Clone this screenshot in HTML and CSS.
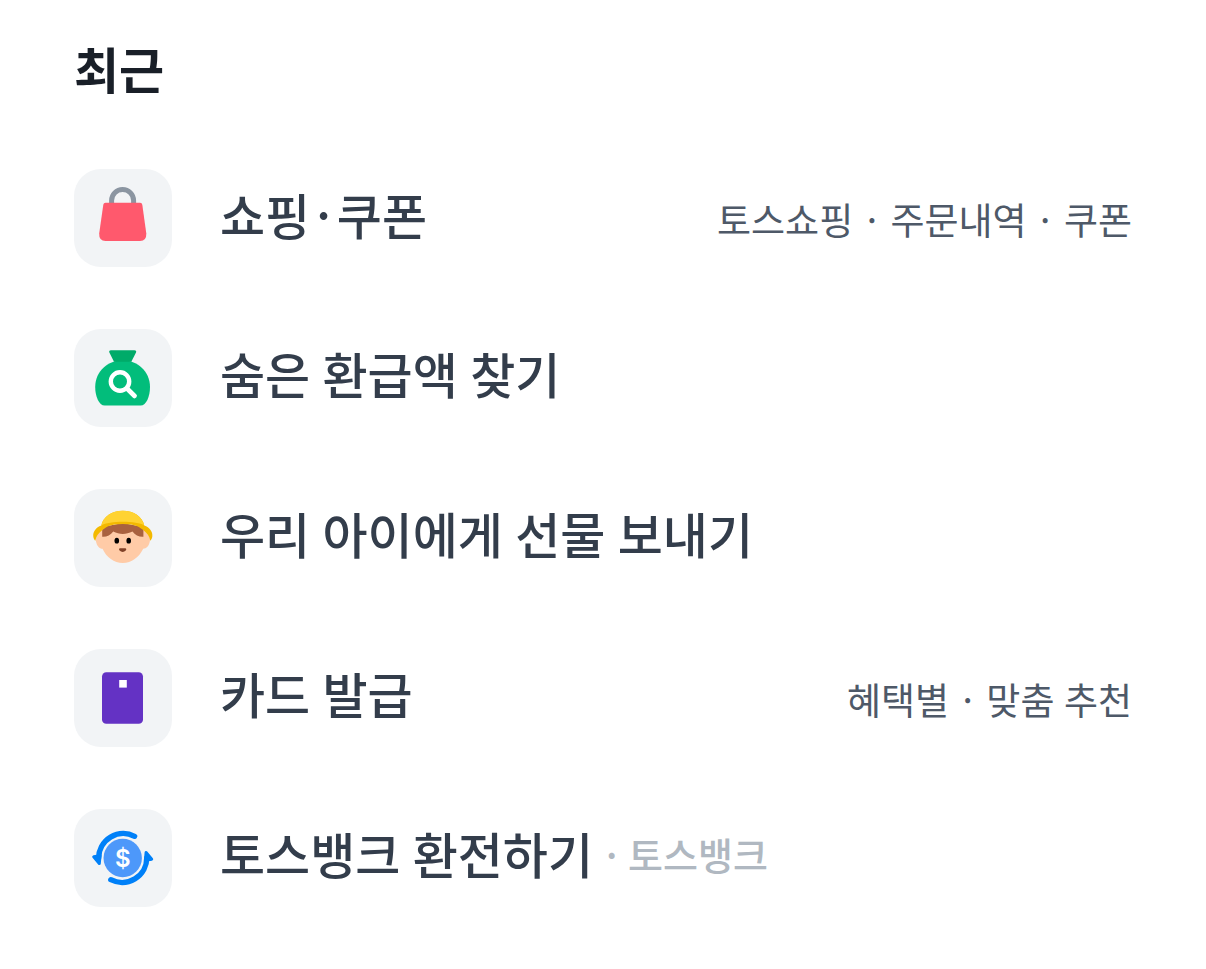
FILE: index.html
```html
<!DOCTYPE html>
<html lang="ko">
<head>
<meta charset="utf-8">
<meta name="viewport" content="width=device-width, initial-scale=1">
<title>최근</title>
<link rel="stylesheet" href="styles.css">
</head>
<body>
<main class="recent">
  <h1 class="recent-title">최근</h1>
  <ul class="list">
    <li class="row">
      <svg class="icon" viewBox="0 0 98 98" aria-hidden="true">
        <path d="M37.6 36V31.600a11 11 0 0 1 22 0V36" fill="none" stroke="#8b95a1" stroke-width="5"/>
        <path d="M31.500 33.800H66.100Q68 33.800 68.300 35.700L72.300 64.500Q72.600 72 66 72H31.500Q24.900 72 25.200 64.500L29.300 35.700Q29.600 33.800 31.500 33.800Z" fill="#ff596d"/>
      </svg>
      <span class="label">쇼핑<span class="dot">·</span>쿠폰</span>
      <span class="detail">토스쇼핑 <span class="dot">·</span> 주문내역 <span class="dot">·</span> 쿠폰</span>
    </li>
    <li class="row">
      <svg class="icon" viewBox="0 0 98 98" aria-hidden="true">
        <path d="M48.600 31.200C63 31.200 76 42 76 58C76 67 72.500 76.600 66.500 76.600H30.800C24.800 76.600 21.200 67 21.200 58C21.200 42 34.200 31.200 48.600 31.200Z" fill="#02bd7b"/>
        <path d="M37 21.200H60.400Q63 21.200 61.900 23.700L57.300 32.700H40L35.500 23.700Q34.400 21.200 37 21.200Z" fill="#00ab69"/>
        <circle cx="46" cy="52.500" r="9.200" fill="none" stroke="#fff" stroke-width="4.400"/>
        <path d="M53 59.500L60.600 67" stroke="#fff" stroke-width="4.600" stroke-linecap="round"/>
      </svg>
      <span class="label">숨은 환급액 찾기</span>
    </li>
    <li class="row">
      <svg class="icon" viewBox="0 0 98 98" aria-hidden="true">
        <path d="M27.500 41C23 43 21 48 22 52.500C22.800 57 25.500 59.800 28.500 59.800C32.500 68.500 40 74 48.800 74S65 68.500 69.200 59.800C72.500 59.500 75 57 75.800 52.500C77 47 75 43 70 41Z" fill="#ffcba7"/>
        <path d="M28.200 47.700V38L48.800 34L69.400 38V47.700C65.500 48 61 46.500 58.500 42.500C52 45.700 45.500 45.700 39.200 42.500C36.500 46.500 32.500 48 28.200 47.700Z" fill="#a9613f"/>
        <path d="M27.300 36.500C29 27.500 38 21.700 48.800 21.700S68.500 27.500 70.300 36.500C75.500 38 79 43 78.300 47.500C78 49.500 77.300 51 76.300 51.700C75.500 47 73 44 69.500 41.200C66 38.600 62 35 48.800 35S31.600 38.600 28.100 41.200C24.600 44 22.100 47 21.300 51.700C20.300 51 19.600 49.500 19.300 47.500C18.700 43 22 38 27.300 36.500Z" fill="#f3b900"/>
        <path d="M27.300 36.600C29 27.500 38 21.700 48.800 21.700S68.500 27.500 70.300 36.600C63 31.600 35 31.600 27.300 36.600Z" fill="#ffd332"/>
        <ellipse cx="42.800" cy="51.700" rx="2.300" ry="2.900"/>
        <ellipse cx="54.700" cy="51.700" rx="2.300" ry="2.900"/>
        <path d="M45.800 59.300H51.500Q52.900 59.600 52 61.200Q48.700 64.800 45.300 61.200Q44.400 59.600 45.800 59.300Z" fill="#804127"/>
      </svg>
      <span class="label">우리 아이에게 선물 보내기</span>
    </li>
    <li class="row">
      <svg class="icon" viewBox="0 0 98 98" aria-hidden="true">
        <rect x="28" y="23.200" width="41" height="51.600" rx="4.300" fill="#6432c4"/>
        <rect x="45.200" y="31" width="7.600" height="7.600" fill="#fff"/>
      </svg>
      <span class="label">카드 발급</span>
      <span class="detail">혜택별 <span class="dot">·</span> 맞춤 추천</span>
    </li>
    <li class="row">
      <svg class="icon" viewBox="0 0 98 98" aria-hidden="true">
        <circle cx="48.700" cy="49" r="19.200" fill="#4d98fa"/>
        <g id="arrow">
          <path d="M60.600 27.300A24.700 24.700 0 0 0 24.600 49" fill="none" stroke="#0080f8" stroke-width="5.400" stroke-linecap="round"/>
          <path d="M19.700 47.800L26 46.800L25.300 54.600Z" fill="#0080f8" stroke="#0080f8" stroke-width="3" stroke-linejoin="round"/>
        </g>
        <use href="#arrow" transform="rotate(180 48.700 49)"/>
        <text class="dollar" x="48.700" y="57.600">$</text>
      </svg>
      <span class="label">토스뱅크 환전하기</span>
      <span class="source">· 토스뱅크</span>
    </li>
  </ul>
</main>
</body>
</html>
```
FILE: styles.css
```css
body {
  margin: 0;
  background: #fff;
  font-family: Lato, "Noto Sans CJK KR", sans-serif;
  color: #333d4b;
}

.recent {
  padding: 34px 74px 62px;
}

.recent-title {
  margin: 0 0 63px;
  font-size: 49px;
  font-weight: 700;
  line-height: 72px;
  color: #191f28;
}

.list {
  display: flex;
  flex-direction: column;
  gap: 62px;
  margin: 0;
  padding: 0;
  list-style: none;
}

.row {
  display: flex;
  align-items: center;
  white-space: nowrap;
}

.icon {
  flex: none;
  width: 98px;
  height: 98px;
  margin-right: 48px;
  border-radius: 27px;
  background: #f2f4f6;
}

.dollar {
  font-family: Inter, sans-serif;
  font-size: 24px;
  font-weight: 600;
  text-anchor: middle;
  fill: #fff;
}

.label {
  padding-bottom: 6px;
  font-size: 49px;
  font-weight: 500;
  line-height: 72px;
}

.dot {
  margin: 0 4px;
  font-family: "Noto Sans CJK KR", sans-serif;
}

.label .dot {
  margin: 0 6px;
}

.detail {
  margin-left: auto;
  padding-top: 4px;
  font-size: 37px;
  line-height: 56px;
  color: #4e5968;
}

.source {
  margin-left: 13px;
  padding-bottom: 8px;
  font-family: "Noto Sans CJK KR", sans-serif;
  font-size: 38px;
  font-weight: 500;
  line-height: 56px;
  color: #b0b8c1;
}
```
